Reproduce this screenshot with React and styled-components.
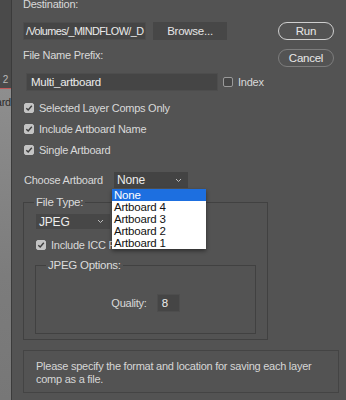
import styled, { createGlobalStyle } from "styled-components";

const GlobalStyle = createGlobalStyle`
  html, body {
    margin: 0;
    padding: 0;
    background: #535353;
    overflow: hidden;
  }
  body {
    font-family: "Liberation Sans", Arial, sans-serif;
    font-size: 11px;
    letter-spacing: -0.25px;
    color: #d9d9d9;
  }
`;

const Page = styled.div`
  display: flex;
  width: 346px;
  height: 400px;
  overflow: hidden;
`;

const Strip = styled.div`
  width: 11px;
  flex: none;
  display: flex;
  flex-direction: column;
  border-right: 1px solid #3b3b3b;
  overflow: hidden;
`;

const StripTop = styled.div`
  height: 89px;
  background: #4a4a4a;
  display: flex;
  align-items: flex-end;
  justify-content: center;
  padding-bottom: 3px;
  box-sizing: border-box;
  font-size: 10px;
  color: #b9b9b9;
  border-bottom: 1px solid #c25a5a;
`;

const StripLayer = styled.div`
  flex: 1;
  background: linear-gradient(#8e8e8e, #7c7c7c 60%, #777);
  color: #2c2c2c;
  font-size: 11px;
  line-height: 14px;
  padding-top: 6px;
  display: flex;
  justify-content: flex-end;
  white-space: nowrap;
`;

const Main = styled.div`
  flex: 1;
  padding-left: 11px;
  display: flex;
  flex-direction: column;
`;

const Top = styled.div`
  display: flex;
  justify-content: space-between;
`;

const TopForm = styled.div`
  display: flex;
  flex-direction: column;
`;

const Label = styled.div`
  line-height: 14px;
  height: 14px;
  margin-top: ${(p) => p.$mt || 0}px;
  white-space: nowrap;
`;

const Row = styled.div`
  display: flex;
  align-items: center;
  gap: ${(p) => p.$gap || 0}px;
  margin-top: ${(p) => p.$mt || 0}px;
  margin-left: ${(p) => p.$ml || 0}px;
`;

const TextField = styled.div`
  box-sizing: border-box;
  width: ${(p) => p.$w}px;
  height: ${(p) => p.$h || 18}px;
  background: #454545;
  border: 1px solid #4d4d4d;
  color: #ececec;
  padding-left: ${(p) => p.$pl ?? 2}px;
  line-height: ${(p) => (p.$h || 18) - 2}px;
  white-space: nowrap;
  overflow: hidden;
  font-size: ${(p) => p.$fs || 11.5}px;
  letter-spacing: ${(p) => p.$ls ?? -0.25}px;
`;

const FlatButton = styled.div`
  box-sizing: border-box;
  width: 74px;
  height: 18px;
  margin-left: 7px;
  background: #474747;
  color: #e6e6e6;
  text-align: center;
  line-height: 18px;
  font-size: 11.5px;
`;

const ButtonCol = styled.div`
  display: flex;
  flex-direction: column;
  gap: 9px;
  padding-top: 22px;
  margin-right: 12px;
`;

const PillButton = styled.div`
  box-sizing: border-box;
  width: 56px;
  height: 18px;
  border-radius: 9px;
  border: 1px solid ${(p) => (p.$dim ? "#7d7d7d" : "#cfcfcf")};
  color: #e8e8e8;
  text-align: center;
  line-height: 16px;
  font-size: 11.5px;
`;

const Box = styled.span`
  box-sizing: border-box;
  width: 10px;
  height: 10px;
  border-radius: 2px;
  flex: none;
  display: flex;
  align-items: center;
  justify-content: center;
  background: ${(p) => (p.$on ? "#c4c4c4" : "#464646")};
  border: 1px solid ${(p) => (p.$on ? "#c4c4c4" : "#9a9a9a")};
`;

const CheckRow = styled.div`
  display: flex;
  align-items: center;
  gap: 5px;
  height: 14px;
  margin-top: ${(p) => p.$mt || 0}px;
  white-space: nowrap;
`;

const Check = ({ on = true, children, mt }) => (
  <CheckRow $mt={mt}>
    <Box $on={on}>
      {on && (
        <svg width="8" height="8" viewBox="0 0 8 8">
          <polyline points="1.3,4.2 3.2,6 6.8,1.8" fill="none" stroke="#3d3d3d" strokeWidth="1.4" />
        </svg>
      )}
    </Box>
    <span>{children}</span>
  </CheckRow>
);

const ChooseLabel = styled.span`
  width: 90px;
  white-space: nowrap;
`;

const SelectBox = styled.div`
  position: relative;
  box-sizing: border-box;
  width: ${(p) => p.$w}px;
  height: ${(p) => p.$h}px;
  margin-top: ${(p) => p.$mt || 0}px;
  background: ${(p) => p.$bg || "#434343"};
  color: #ededed;
  font-size: 12px;
  letter-spacing: -0.2px;
  padding: 0 6px 0 3px;
  display: flex;
  align-items: center;
  justify-content: space-between;
`;

const Chevron = () => (
  <svg width="7" height="5" viewBox="0 0 7 5">
    <polyline points="1,1 3.5,3.5 6,1" fill="none" stroke="#bdbdbd" strokeWidth="1" />
  </svg>
);

const Menu = styled.div`
  position: absolute;
  top: 17px;
  left: -2px;
  width: 94px;
  background: #fff;
  box-shadow: 0 2px 4px rgba(0, 0, 0, 0.45);
  z-index: 5;
`;

const MenuItem = styled.div`
  height: 12px;
  line-height: 12px;
  padding-left: 2px;
  font-size: 11.5px;
  letter-spacing: -0.2px;
  color: ${(p) => (p.$active ? "#fff" : "#111")};
  background: ${(p) => (p.$active ? "#1d6fe0" : "transparent")};
`;

const Fieldset = styled.fieldset`
  margin: ${(p) => p.$m || "0"};
  width: ${(p) => p.$w}px;
  box-sizing: border-box;
  border: 1px solid #414141;
  padding: 0 12px ${(p) => p.$pb}px;
  min-width: 0;
`;

const Legend = styled.legend`
  padding: 0 2px;
  margin-left: -2px;
  line-height: 14px;
  font-size: 11.5px;
  color: #dcdcdc;
`;

const Message = styled.div`
  box-sizing: border-box;
  margin: 10px 7px 0 0;
  height: 43px;
  border: 1px solid #444;
  padding: 9px 12px 0;
  line-height: 12.5px;
  color: #d6d6d6;
  white-space: nowrap;
`;

const artboards = ["None", "Artboard 4", "Artboard 3", "Artboard 2", "Artboard 1"];

export default function App() {
  return (
    <Page>
      <GlobalStyle />
      <Strip>
        <StripTop>2</StripTop>
        <StripLayer>ard</StripLayer>
      </Strip>
      <Main>
        <Top>
          <TopForm>
            <Label $mt={-3}>Destination:</Label>
            <Row $mt={11}>
              <TextField $w={123} $fs={10.8} $ls={-0.55}>/Volumes/_MINDFLOW/_D</TextField>
              <FlatButton>Browse...</FlatButton>
            </Row>
            <Label $mt={8}>File Name Prefix:</Label>
            <Row $mt={11} $ml={3}>
              <TextField $w={192} $pl={4}>Multi_artboard</TextField>
              <Row $ml={5}>
                <Check on={false}>Index</Check>
              </Row>
            </Row>
          </TopForm>
          <ButtonCol>
            <PillButton>Run</PillButton>
            <PillButton $dim>Cancel</PillButton>
          </ButtonCol>
        </Top>
        <Row $mt={10} $ml={1}>
          <Check>Selected Layer Comps Only</Check>
        </Row>
        <Row $mt={7} $ml={1}>
          <Check>Include Artboard Name</Check>
        </Row>
        <Row $mt={7} $ml={1}>
          <Check>Single Artboard</Check>
        </Row>
        <Row $mt={15} $ml={1}>
          <ChooseLabel>Choose Artboard</ChooseLabel>
          <SelectBox $w={74} $h={16}>
            <span>None</span>
            <Chevron />
            <Menu>
              {artboards.map((a, i) => (
                <MenuItem key={a} $active={i === 0}>
                  {a}
                </MenuItem>
              ))}
            </Menu>
          </SelectBox>
        </Row>
        <Fieldset $w={245} $pb={5} $m="7px 0 0">
          <Legend>File Type:</Legend>
          <SelectBox $w={74} $h={15} $bg="#474747" $mt={5}>
            <span>JPEG</span>
            <Chevron />
          </SelectBox>
          <Check mt={9}>Include ICC Profile</Check>
          <Fieldset $w={221} $pb={21} $m="6px 0 0 -1px">
            <Legend>JPEG Options:</Legend>
            <Row $mt={22} $gap={10} style={{ justifyContent: "center" }}>
              <span>Quality:</span>
              <TextField $w={23} $pl={4}>8</TextField>
            </Row>
          </Fieldset>
        </Fieldset>
        <Message>
          Please specify the format and location for saving each layer
          <br />
          comp as a file.
        </Message>
      </Main>
    </Page>
  );
}
